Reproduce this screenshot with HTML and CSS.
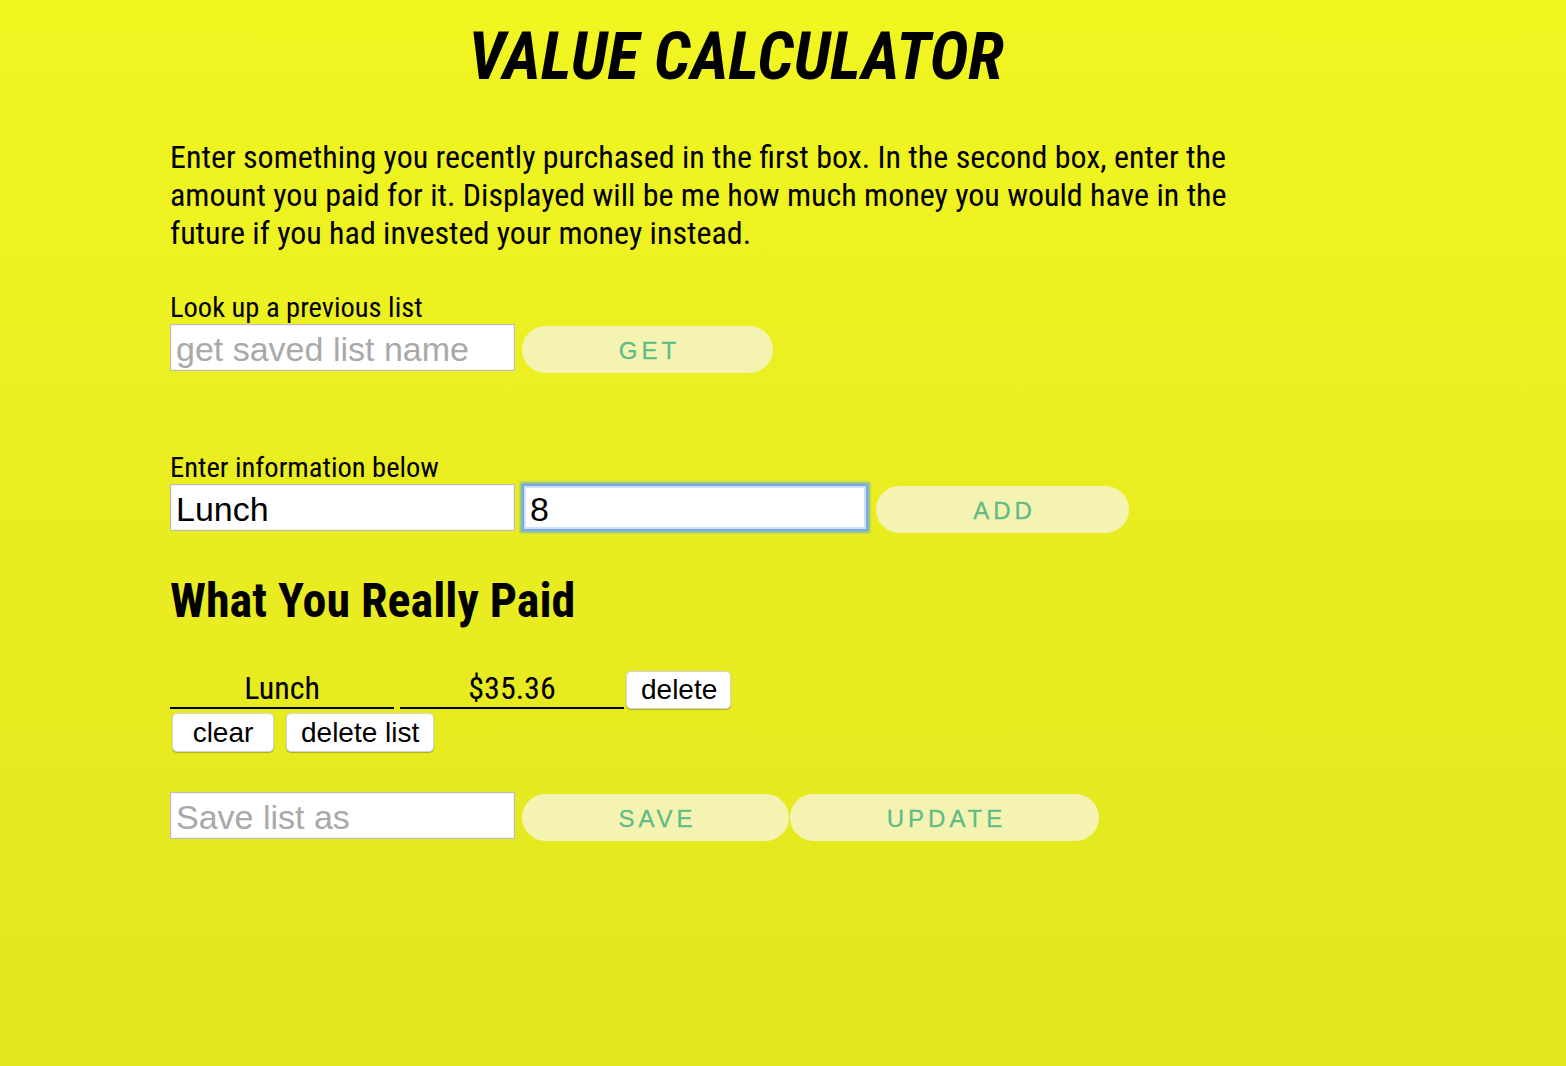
FILE: index.html
```html
<!DOCTYPE html>
<html lang="en">
<head>
<meta charset="utf-8">
<title>Value Calculator</title>
<link rel="stylesheet" href="styles.css">
</head>
<body>
<div class="page">
  <h1 class="title">VALUE CALCULATOR</h1>
  <p class="intro">Enter something you recently purchased in the first box. In the second box, enter the amount you paid for it. Displayed will be me how much money you would have in the future if you had invested your money instead.</p>

  <div class="label label-first">Look up a previous list</div>
  <div class="row">
    <input class="field" type="text" placeholder="get saved list name">
    <button class="pill pill-get">GET</button>
  </div>

  <div class="label label-second">Enter information below</div>
  <div class="row">
    <input class="field" type="text" value="Lunch">
    <input class="field field-focus" type="text" value="8">
    <button class="pill pill-add">ADD</button>
  </div>

  <h2 class="subtitle">What You Really Paid</h2>

  <div class="item-row">
    <div class="cell">Lunch</div>
    <div class="cell">$35.36</div>
    <button class="small-btn btn-delete">delete</button>
  </div>
  <div class="actions">
    <button class="small-btn btn-clear">clear</button>
    <button class="small-btn">delete list</button>
  </div>

  <div class="row save-row">
    <input class="field" type="text" placeholder="Save list as">
    <button class="pill pill-save">SAVE</button>
    <button class="pill pill-update">UPDATE</button>
  </div>
</div>
</body>
</html>
```
FILE: styles.css
```css
html, body {
  margin: 0;
  padding: 0;
}

body {
  min-height: 1066px;
  background: linear-gradient(180deg, #f1f621 0%, #e9ed20 50%, #e2e61f 100%);
  font-family: "Roboto Condensed", "Roboto", sans-serif;
  color: #000;
}

.page {
  margin-left: 170px;
  width: 1132px;
  padding-bottom: 40px;
}

.title {
  margin: 18px 0 0;
  font-size: 66px;
  line-height: 77px;
  font-weight: 700;
  font-style: italic;
  text-align: center;
}

.intro {
  margin: 43px 0 0;
  font-size: 32px;
  line-height: 38px;
}

.label {
  font-size: 28.5px;
  line-height: 33px;
}

.label-first {
  margin-top: 39px;
}

.label-second {
  margin-top: 78px;
}

.row {
  display: flex;
  align-items: flex-start;
  gap: 7px;
}

.field {
  box-sizing: border-box;
  width: 345px;
  height: 47px;
  margin: 0;
  padding: 3px 5px 0;
  border: 1px solid #bdbdbd;
  box-shadow: inset 0 0 0 1px #f2f2f2;
  background: #fff;
  font-family: "Liberation Sans", Arial, sans-serif;
  font-size: 34px;
  color: #000;
  outline: none;
}

.field::placeholder {
  color: #a9a9a9;
}

.field-focus {
  width: 346px;
  padding-left: 6px;
  border: 2px solid #78abe8;
  box-shadow: 0 0 2px 2px rgba(120, 178, 190, 0.85), inset 0 0 0 2px #cfe2fb;
}

.pill {
  box-sizing: border-box;
  height: 47px;
  margin: 2px 0 0;
  padding: 2px 0 0 4px;
  border: none;
  border-radius: 24px;
  background: #f5f3b1;
  color: #5fbb87;
  font-family: "Liberation Sans", Arial, sans-serif;
  font-size: 24px;
  letter-spacing: 4px;
  text-align: center;
  -webkit-text-stroke: 0.3px #5fbb87;
}

.pill-get {
  width: 251px;
}

.pill-add {
  width: 253px;
  margin-left: 1px;
}

.pill-save {
  width: 267px;
}

.pill-update {
  width: 309px;
  margin-left: -6px;
}

.subtitle {
  margin: 40px 0 0;
  font-size: 48px;
  line-height: 56px;
  font-weight: 700;
}

.item-row {
  display: flex;
  align-items: flex-start;
  gap: 6px;
  margin-top: 42px;
}

.cell {
  width: 224px;
  height: 36px;
  border-bottom: 2px solid #000;
  font-size: 32px;
  line-height: 34px;
  text-align: center;
}

.btn-delete {
  margin-left: -4px;
  width: 105px;
}

.small-btn {
  box-sizing: border-box;
  height: 38px;
  padding: 0 14px;
  border: 1px solid #d4d4d4;
  border-radius: 5px;
  background: #fff;
  box-shadow: 0 1px 1px rgba(0, 0, 0, 0.25);
  font-family: "Liberation Sans", Arial, sans-serif;
  font-size: 28px;
  line-height: 36px;
  color: #000;
}

.actions {
  display: flex;
  gap: 12px;
  margin: 4px 0 0 2px;
}

.btn-clear {
  width: 102px;
}

.actions .small-btn {
  height: 39px;
}

.save-row {
  margin-top: 40px;
}
```
